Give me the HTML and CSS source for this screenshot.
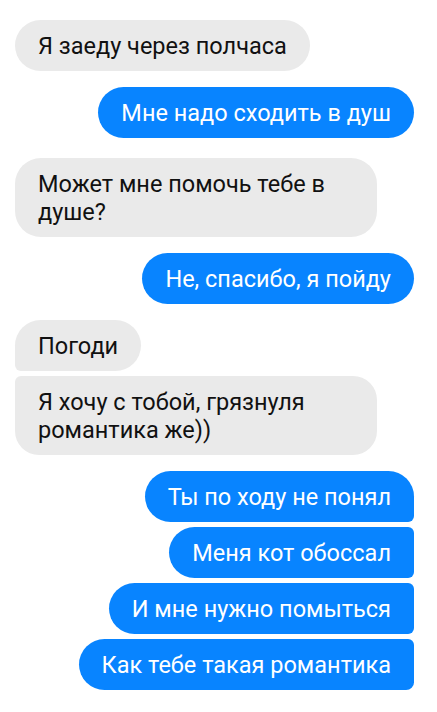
FILE: index.html
```html
<!DOCTYPE html>
<html lang="ru">
<head>
    <meta charset="UTF-8">
    <meta name="viewport" content="width=device-width, initial-scale=1.0">
    <title>Переписка</title>
    <link rel="stylesheet" href="styles.css">
</head>
<body>
    <div class="chat">
        <div class="msg in">Я заеду через полчаса</div>
        <div class="msg out">Мне надо сходить в душ</div>
        <div class="msg in wide">Может мне помочь тебе в душе?</div>
        <div class="msg out">Не, спасибо, я пойду</div>

        <!-- два сообщения подряд -->
        <div class="msg in first">Погоди</div>
        <div class="msg in last cont">Я хочу с тобой, грязнуля романтика же))</div>

        <div class="msg out first">Ты по ходу не понял</div>
        <div class="msg out middle cont">Меня кот обоссал</div>
        <div class="msg out middle cont">И мне нужно помыться</div>
        <div class="msg out last cont">Как тебе такая романтика</div>
    </div>
</body>
</html>
```

FILE: styles.css
```css
* {
    margin: 0;
    padding: 0;
    box-sizing: border-box;
}

body {
    font-family: 'Roboto', 'Noto Sans', sans-serif;
    background: #fff;
}

.chat {
    display: flex;
    flex-direction: column;
    padding: 20px 23px 20px 15px;
}

.msg {
    width: fit-content;
    max-width: 362px;
    padding: 11.5px 23px;
    font-size: 23.5px;
    line-height: 28px;
    border-radius: 26px;
}

.msg + .msg {
    margin-top: 16px;
}

.msg.cont {
    margin-top: 5px;
}

.msg.wide {
    margin-top: 20px;
}

.in {
    align-self: flex-start;
    background-color: #eaeaea;
    color: #111;
}

.out {
    align-self: flex-end;
    background-color: #0884ff;
    color: #fff;
}

.in.first {
    border-bottom-left-radius: 6px;
}

.in.last {
    border-radius: 6px 24px 24px 24px;
}

.out.first {
    border-bottom-right-radius: 6px;
}

.out.middle {
    border-top-right-radius: 6px;
    border-bottom-right-radius: 6px;
}

.out.last {
    border-top-right-radius: 6px;
    border-bottom-right-radius: 8px;
}
```
